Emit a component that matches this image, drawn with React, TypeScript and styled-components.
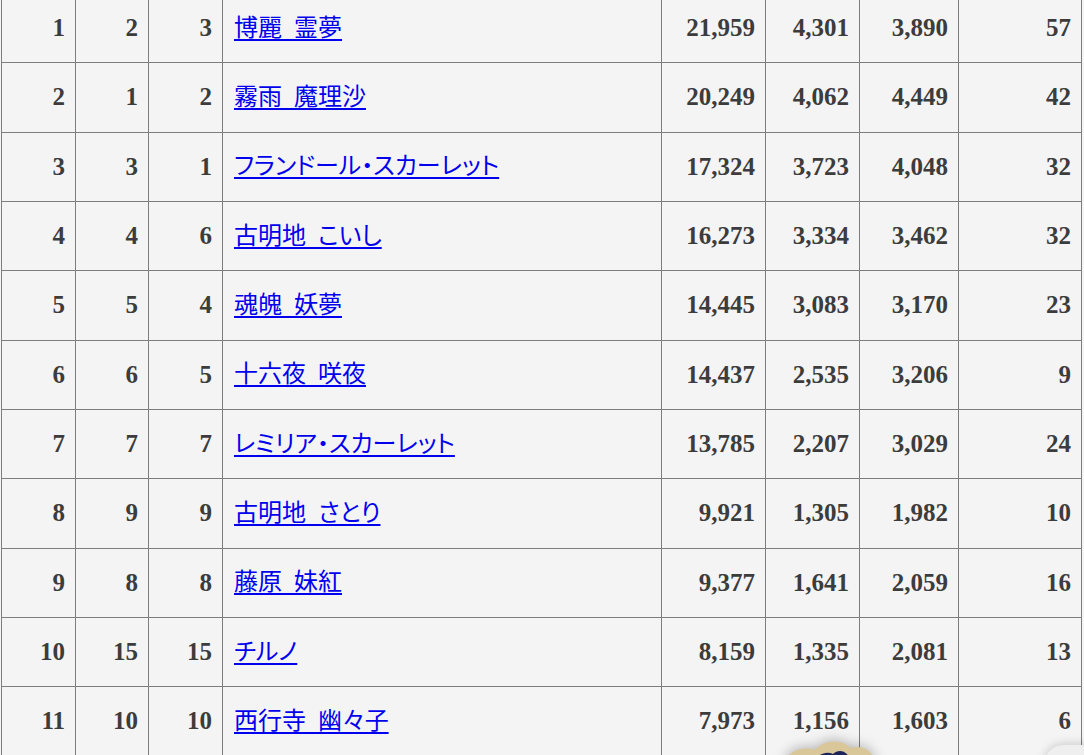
import React from 'react';
import styled, { createGlobalStyle } from 'styled-components';

interface RankRow {
  total: number;
  prev: number;
  prev2: number;
  name: string;
  points: string;
  first: string;
  second: string;
  comments: number;
}

const rows: RankRow[] = [
  { total: 1, prev: 2, prev2: 3, name: '博麗 霊夢', points: '21,959', first: '4,301', second: '3,890', comments: 57 },
  { total: 2, prev: 1, prev2: 2, name: '霧雨 魔理沙', points: '20,249', first: '4,062', second: '4,449', comments: 42 },
  { total: 3, prev: 3, prev2: 1, name: 'フランドール・スカーレット', points: '17,324', first: '3,723', second: '4,048', comments: 32 },
  { total: 4, prev: 4, prev2: 6, name: '古明地 こいし', points: '16,273', first: '3,334', second: '3,462', comments: 32 },
  { total: 5, prev: 5, prev2: 4, name: '魂魄 妖夢', points: '14,445', first: '3,083', second: '3,170', comments: 23 },
  { total: 6, prev: 6, prev2: 5, name: '十六夜 咲夜', points: '14,437', first: '2,535', second: '3,206', comments: 9 },
  { total: 7, prev: 7, prev2: 7, name: 'レミリア・スカーレット', points: '13,785', first: '2,207', second: '3,029', comments: 24 },
  { total: 8, prev: 9, prev2: 9, name: '古明地 さとり', points: '9,921', first: '1,305', second: '1,982', comments: 10 },
  { total: 9, prev: 8, prev2: 8, name: '藤原 妹紅', points: '9,377', first: '1,641', second: '2,059', comments: 16 },
  { total: 10, prev: 15, prev2: 15, name: 'チルノ', points: '8,159', first: '1,335', second: '2,081', comments: 13 },
  { total: 11, prev: 10, prev2: 10, name: '西行寺 幽々子', points: '7,973', first: '1,156', second: '1,603', comments: 6 },
];

const colWidths = [74, 73, 74, 439, 104, 94, 99, 123];

export default function App() {
  return (
    <>
      <GlobalStyle />
      <Page>
        <RankTable>
          <colgroup>
            {colWidths.map((w, i) => (
              <col key={i} style={{ width: w }} />
            ))}
          </colgroup>
          <tbody>
            {rows.map((r) => (
              <Row key={r.total}>
                <NumCell>{r.total}</NumCell>
                <NumCell>{r.prev}</NumCell>
                <NumCell>{r.prev2}</NumCell>
                <NameCell>
                  <NameLink href="#">{r.name}</NameLink>
                </NameCell>
                <NumCell>{r.points}</NumCell>
                <NumCell>{r.first}</NumCell>
                <NumCell>{r.second}</NumCell>
                <NumCell>{r.comments}</NumCell>
              </Row>
            ))}
          </tbody>
        </RankTable>
        <Mascot>
          <svg width="110" height="30" viewBox="0 0 110 30">
            <path d="M8 30 C12 14 28 10 40 14 C48 4 66 2 76 12 C88 8 100 16 102 30 Z" fill="#d9c79a" />
            <path d="M36 30 C40 20 50 14 58 18 C64 12 74 14 78 30 Z" fill="#1d2459" />
          </svg>
        </Mascot>
        <CornerShade />
      </Page>
    </>
  );
}

const GlobalStyle = createGlobalStyle`
  html, body {
    margin: 0;
    padding: 0;
    overflow: hidden;
    background: #f4f4f4;
  }
`;

const Page = styled.div`
  position: relative;
  width: 1084px;
  height: 755px;
  overflow: hidden;
  background: #f4f4f4;
`;

const RankTable = styled.table`
  border-collapse: collapse;
  table-layout: fixed;
  width: 1080px;
  margin: -7px 0 0 1px;
  font-family: "Liberation Serif", "Noto Sans CJK JP", serif;
  font-size: 25px;
  color: #3c3c3c;
`;

const Row = styled.tr`
  height: 69.33px;
`;

const NumCell = styled.td`
  border: 1px solid #7d7d7d;
  padding: 0 10px;
  text-align: right;
  font-weight: bold;
  vertical-align: middle;
`;

const NameCell = styled.td`
  border: 1px solid #7d7d7d;
  padding: 0 11px 6px;
  text-align: left;
  vertical-align: middle;
`;

const NameLink = styled.a`
  color: #0000ee;
  text-decoration: underline;
  text-underline-offset: 3px;
  font-size: 24px;
  font-family: "Liberation Serif", "Noto Sans CJK JP", serif;
  font-feature-settings: "palt";
  word-spacing: 6px;
`;

const Mascot = styled.div`
  position: absolute;
  left: 775px;
  top: 736px;
  filter: drop-shadow(0 -2px 6px rgba(0, 0, 0, 0.25));
`;

const CornerShade = styled.div`
  position: absolute;
  right: -20px;
  bottom: -30px;
  width: 60px;
  height: 40px;
  border-radius: 20px;
  background: #efefef;
  box-shadow: 0 -2px 10px rgba(0, 0, 0, 0.15);
`;
